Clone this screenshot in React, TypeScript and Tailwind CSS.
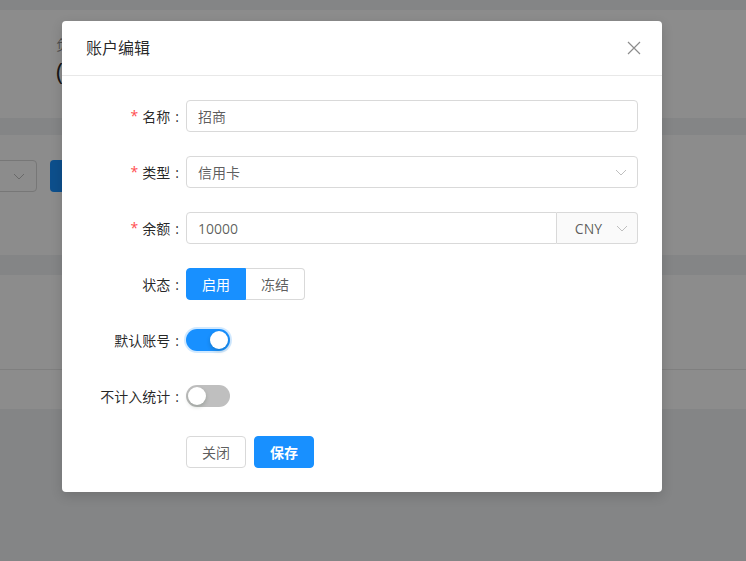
import React, { useState } from "react";

const Chevron = () => (
  <svg width="12" height="12" viewBox="0 0 12 12" fill="none" className="text-[#bfbfbf]">
    <path d="M1 4l5 5 5-5" stroke="currentColor" strokeWidth="1" />
  </svg>
);

const Label = ({ text, required }: { text: string; required?: boolean }) => (
  <div className="w-[100px] shrink-0 h-8 flex items-center justify-end text-[14px] text-[rgba(0,0,0,0.85)]">
    {required && <span className="text-[#ff4d4f] mr-1 text-[14px] leading-none">*</span>}
    <span>{text}</span>
    <span className="ml-[5px] mr-[7px]">:</span>
  </div>
);

const Switch = ({ on, focus }: { on: boolean; focus?: boolean }) => (
  <div
    className={
      "relative w-11 h-[22px] rounded-full " +
      (on ? "bg-[#1890ff] " : "bg-[#bfbfbf] ") +
      (focus ? "shadow-[0_0_0_2px_rgba(24,144,255,0.2)]" : "")
    }
  >
    <span
      className={
        "absolute top-[2px] w-[18px] h-[18px] rounded-full bg-white shadow-[0_2px_4px_rgba(0,35,11,0.2)] " +
        (on ? "left-[24px]" : "left-[2px]")
      }
    />
  </div>
);

const App = () => {
  const [status, setStatus] = useState("on");

  return (
    <div className="relative w-full h-[561px] overflow-hidden bg-[#f0f2f5] font-['Open_Sans','Noto_Sans_CJK_SC',sans-serif]">
      {/* page behind the mask */}
      <div className="flex flex-col h-full">
        <div className="h-[10px]" />
        <div className="h-[108px] bg-white pl-[56px] pt-[24px]">
          <div className="w-[6px] overflow-hidden whitespace-nowrap text-[14px] text-[rgba(0,0,0,0.45)]">负债</div>
          <div className="w-[6px] overflow-hidden whitespace-nowrap text-[24px] text-[rgba(0,0,0,0.85)] leading-8">(0)</div>
        </div>
        <div className="h-[17px]" />
        <div className="h-[120px] bg-white pt-[25px] flex gap-[13px]">
          <div className="ml-[-80px] w-[117px] h-8 border border-[#d9d9d9] rounded flex items-center justify-end pr-[11px]">
            <Chevron />
          </div>
          <div className="w-[88px] h-8 rounded bg-[#1890ff]" />
        </div>
        <div className="h-[20px]" />
        <div className="h-[95px] bg-white border-b border-[#e8e8e8]" />
        <div className="h-[39px] bg-white" />
        <div className="flex-1" />
      </div>

      {/* mask */}
      <div className="absolute inset-0 bg-[rgba(0,0,0,0.45)]" />

      {/* modal */}
      <div className="absolute inset-0 flex items-start">
        <div className="ml-[62px] mt-[21px] w-[600px] bg-white rounded shadow-[0_4px_12px_rgba(0,0,0,0.15)]">
          <div className="flex items-center justify-between px-6 py-4 border-b border-[#e8e8e8]">
            <div className="text-[16px] leading-[22px] text-[rgba(0,0,0,0.85)]">账户编辑</div>
            <svg width="14" height="14" viewBox="0 0 14 14" className="mr-[-3px] text-[rgba(0,0,0,0.45)]">
              <path d="M1 1l12 12M13 1L1 13" stroke="currentColor" strokeWidth="1.2" />
            </svg>
          </div>

          <div className="p-6 text-[14px]">
            <div className="flex mb-6">
              <Label text="名称" required />
              <div className="flex-1 h-8 border border-[#d9d9d9] rounded px-[11px] flex items-center text-[rgba(0,0,0,0.65)]">
                招商
              </div>
            </div>

            <div className="flex mb-6">
              <Label text="类型" required />
              <div className="flex-1 h-8 border border-[#d9d9d9] rounded pl-[11px] pr-[10px] flex items-center justify-between text-[rgba(0,0,0,0.65)]">
                <span>信用卡</span>
                <Chevron />
              </div>
            </div>

            <div className="flex mb-6">
              <Label text="余额" required />
              <div className="flex-1 flex h-8">
                <div className="flex-1 border border-[#d9d9d9] rounded-l px-[11px] flex items-center text-[rgba(0,0,0,0.65)]">
                  10000
                </div>
                <div className="w-[81px] border border-l-0 border-[#d9d9d9] rounded-r bg-[#fafafa] flex items-center justify-end gap-[14px] pr-[9px] text-[rgba(0,0,0,0.65)]">
                  <span>CNY</span>
                  <Chevron />
                </div>
              </div>
            </div>

            <div className="flex mb-6">
              <Label text="状态" />
              <div className="flex h-8">
                <button
                  onClick={() => setStatus("on")}
                  className={
                    "px-[15px] rounded-l border " +
                    (status === "on"
                      ? "bg-[#1890ff] border-[#1890ff] text-white"
                      : "bg-white border-[#d9d9d9] text-[rgba(0,0,0,0.65)]")
                  }
                >
                  启用
                </button>
                <button
                  onClick={() => setStatus("off")}
                  className={
                    "px-[15px] rounded-r border border-l-0 " +
                    (status === "off"
                      ? "bg-[#1890ff] border-[#1890ff] text-white"
                      : "bg-white border-[#d9d9d9] text-[rgba(0,0,0,0.65)]")
                  }
                >
                  冻结
                </button>
              </div>
            </div>

            <div className="flex mb-6 items-center">
              <Label text="默认账号" />
              <Switch on focus />
            </div>

            <div className="flex mb-6 items-center">
              <Label text="不计入统计" />
              <Switch on={false} />
            </div>

            <div className="flex gap-2 pl-[100px]">
              <button className="h-8 px-[15px] rounded border border-[#d9d9d9] bg-white text-[rgba(0,0,0,0.65)]">
                关闭
              </button>
              <button className="h-8 px-[15px] rounded border border-[#1890ff] bg-[#1890ff] text-white font-semibold">
                保存
              </button>
            </div>
          </div>
        </div>
      </div>
    </div>
  );
};

export default App;
